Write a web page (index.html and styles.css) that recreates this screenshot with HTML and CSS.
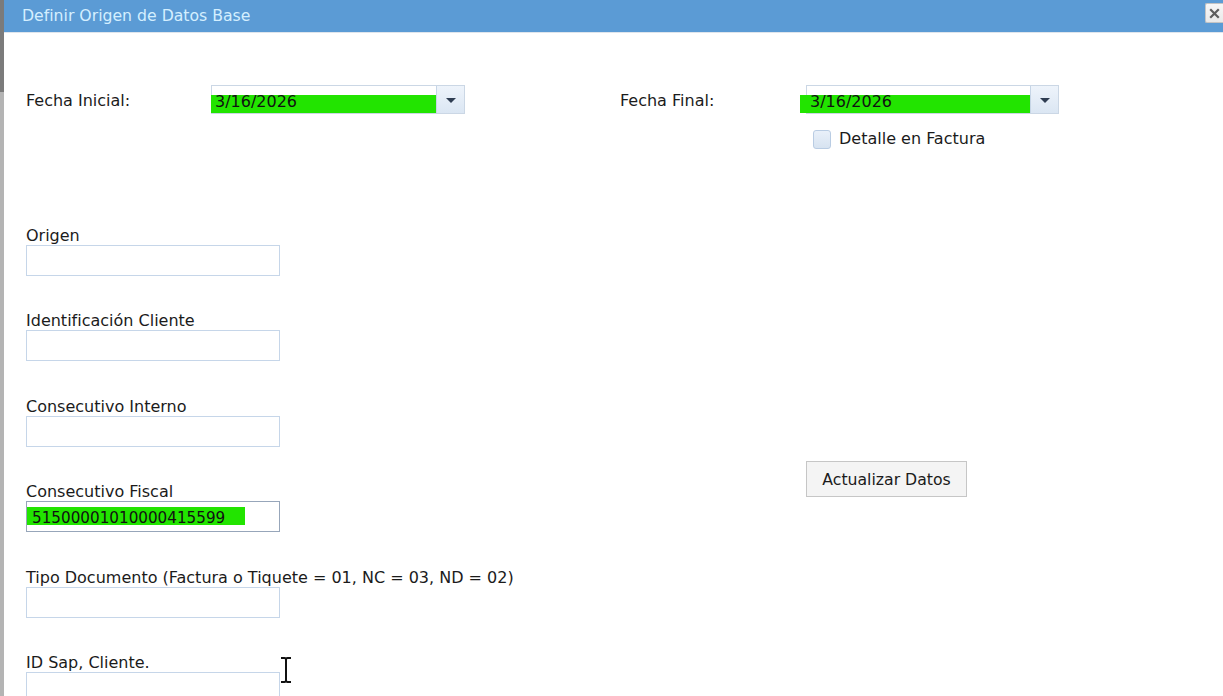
FILE: index.html
```html
<!DOCTYPE html>
<html lang="es">
<head>
<meta charset="utf-8">
<title>Definir Origen de Datos Base</title>
<link rel="stylesheet" href="styles.css">
</head>
<body>
<div class="window">
  <div class="edge"></div>
  <div class="dialog">
    <header class="titlebar">
      <span class="title">Definir Origen de Datos Base</span>
      <button class="close" type="button" aria-label="Cerrar">
        <svg width="11" height="11" viewBox="0 0 11 11"><path d="M2 2 L9 9 M9 2 L2 9" stroke="#5e5e5e" stroke-width="2.2" stroke-linecap="square"/></svg>
      </button>
    </header>
    <main class="content">
      <div class="dates">
        <span class="lbl">Fecha Inicial:</span>
        <div class="combo">
          <span class="mark"></span>
          <span class="value">3/16/2026</span>
          <span class="arrow"><span class="tri"></span></span>
        </div>
        <span></span>
        <span class="lbl">Fecha Final:</span>
        <div class="combo">
          <span class="mark mark-final"></span>
          <span class="value">3/16/2026</span>
          <span class="arrow"><span class="tri"></span></span>
        </div>
        <div class="check">
          <span class="box"></span>
          <span>Detalle en Factura</span>
        </div>
      </div>

      <div class="lower">
        <div class="fields">
          <div class="field">
            <span class="flabel">Origen</span>
            <div class="input"></div>
          </div>
          <div class="field">
            <span class="flabel">Identificación Cliente</span>
            <div class="input"></div>
          </div>
          <div class="field">
            <span class="flabel">Consecutivo Interno</span>
            <div class="input"></div>
          </div>
          <div class="field">
            <span class="flabel">Consecutivo Fiscal</span>
            <div class="input input-focus">
              <span class="mark mark-fiscal"></span>
              <span class="value">51500001010000415599</span>
            </div>
          </div>
          <div class="field">
            <span class="flabel">Tipo Documento (Factura o Tiquete = 01, NC = 03, ND = 02)</span>
            <div class="input"></div>
          </div>
          <div class="field">
            <span class="flabel">ID Sap, Cliente.</span>
            <div class="input"></div>
          </div>
        </div>
        <div class="side">
          <button class="btn" type="button">Actualizar Datos</button>
        </div>
      </div>
    </main>
    <svg class="cursor" width="14" height="28" viewBox="0 0 14 28" aria-hidden="true">
      <path d="M2 2 H5.5 Q7 2 7 4 V24 Q7 26 5.5 26 H2 M12 2 H8.5 Q7 2 7 4 M12 26 H8.5 Q7 26 7 24" fill="none" stroke="#fff" stroke-width="4"/>
      <path d="M2 2 H5.5 Q7 2 7 4 V24 Q7 26 5.5 26 H2 M12 2 H8.5 Q7 2 7 4 M12 26 H8.5 Q7 26 7 24" fill="none" stroke="#111" stroke-width="2"/>
    </svg>
  </div>
</div>
</body>
</html>
```
FILE: styles.css
```css
* { box-sizing: border-box; }

html, body {
  margin: 0;
  padding: 0;
}

body {
  width: 1223px;
  height: 696px;
  overflow: hidden;
  background: #ffffff;
  font-family: "DejaVu Sans", Verdana, sans-serif;
  font-size: 16px;
  color: #1b1b1b;
}

.window {
  display: flex;
  height: 696px;
}

.edge {
  width: 4px;
  flex: none;
  background: linear-gradient(#7b7b7b 0, #7b7b7b 92px, #b4b4b4 92px);
}

.dialog {
  flex: 1;
  position: relative;
}

.titlebar {
  height: 33px;
  background: #5b9bd5;
  border-bottom: 1px solid #dfe5ec;
  display: flex;
  align-items: flex-start;
  padding-left: 18px;
}

.title {
  color: #d4efff;
  font-size: 15.7px;
  line-height: 32px;
}

.close {
  margin-left: auto;
  margin-top: 3px;
  width: 18px;
  height: 20px;
  padding: 0;
  background: linear-gradient(#f7f7f7, #e9e9e9);
  border: 1px solid #c4c4c4;
  border-right: none;
  border-radius: 2px 0 0 2px;
  display: flex;
  align-items: center;
  justify-content: center;
}

.content {
  padding-left: 22px;
}

.dates {
  display: grid;
  grid-template-columns: 185px 254px 155px 186px 253px;
  align-items: center;
  margin-top: 52px;
}

.lbl {
  line-height: 20px;
  padding-top: 2px;
}

.combo {
  position: relative;
  height: 29px;
  border: 1px solid #cbd7e5;
  display: flex;
  align-items: center;
  background: #fff;
}

.combo .value {
  position: relative;
  flex: 1;
  padding-left: 3px;
  padding-top: 3px;
  font-size: 16px;
  color: #111;
}

.mark {
  position: absolute;
  left: -1px;
  top: 9px;
  width: 225px;
  height: 18px;
  background: #22e400;
}

.mark-final {
  left: -7px;
  width: 231px;
}

.arrow {
  position: relative;
  width: 28px;
  height: 100%;
  border-left: 1px solid #c6d5e6;
  background: linear-gradient(#eef4fb, #dbe6f3);
  display: flex;
  align-items: center;
  justify-content: center;
}

.tri {
  width: 0;
  height: 0;
  border-left: 5px solid transparent;
  border-right: 5px solid transparent;
  border-top: 5px solid #2f3d52;
  margin-top: 1px;
}

.check {
  grid-column: 5;
  display: flex;
  align-items: center;
  gap: 8px;
  margin-top: 15px;
  padding-left: 7px;
  line-height: 20px;
}

.box {
  width: 18px;
  height: 19px;
  border: 1px solid #b9cce3;
  border-radius: 3px;
  background: linear-gradient(#e9f0f9, #d7e3f1);
}

.lower {
  display: flex;
  margin-top: 76px;
}

.fields {
  width: 780px;
  display: flex;
  flex-direction: column;
  gap: 34.4px;
}

.field {
  display: flex;
  flex-direction: column;
}

.flabel {
  line-height: 20px;
  padding-top: 1px;
  margin-bottom: -1px;
}

.input {
  position: relative;
  width: 254px;
  height: 31px;
  border: 1px solid #c6d6e9;
  background: #fff;
  display: flex;
  align-items: center;
}

.input-focus {
  border-color: #97a6ba;
}

.input .value {
  position: relative;
  padding-left: 5px;
  padding-top: 3px;
  font-size: 15.2px;
  color: #111;
}

.mark-fiscal {
  left: 0;
  top: 5px;
  width: 218px;
  height: 18px;
}

.side {
  padding-top: 236px;
}

.btn {
  width: 161px;
  height: 36px;
  background: #f4f4f4;
  border: 1px solid #c6c6c6;
  border-radius: 0;
  font-family: "DejaVu Sans", Verdana, sans-serif;
  font-size: 15.7px;
  color: #1b1b1b;
  padding: 0;
}

.cursor {
  position: absolute;
  left: 275px;
  top: 656px;
}
```
